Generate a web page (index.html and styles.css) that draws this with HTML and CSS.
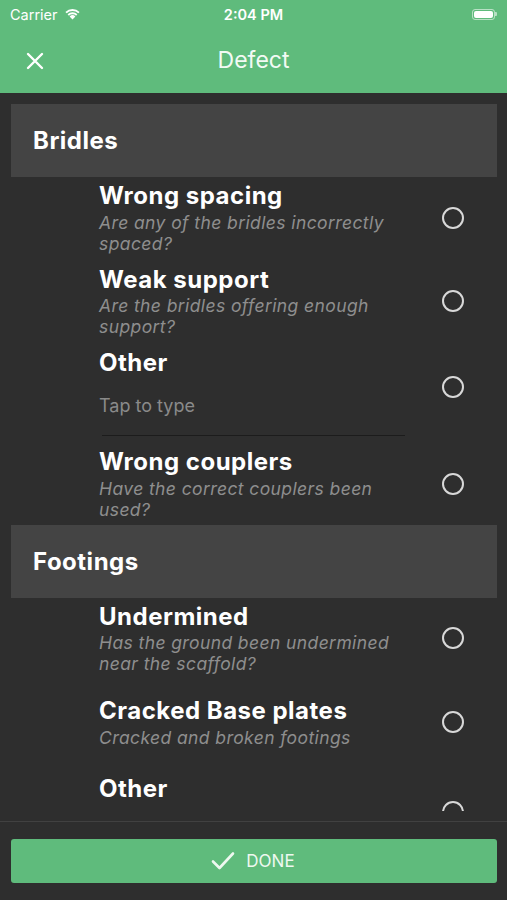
FILE: index.html
```html
<!DOCTYPE html>
<html>
<head>
<meta charset="utf-8">
<link rel="stylesheet" href="styles.css">
</head>
<body>
<div class="app">
  <div class="topbar">
    <div class="status">
      <div class="status-left">
        <span class="carrier">Carrier</span>
        <svg class="wifi" width="17" height="13" viewBox="0 0 17 13"><path d="M8.5 12.6 L5.6 9.4 A4.2 4.2 0 0 1 11.4 9.4 Z" fill="#fff"/><path d="M3.6 7.3 A7 7 0 0 1 13.4 7.3 L12.1 8.7 A5.2 5.2 0 0 0 4.9 8.7 Z" fill="#fff"/><path d="M1.4 4.9 A10.2 10.2 0 0 1 15.6 4.9 L14.3 6.3 A8.3 8.3 0 0 0 2.7 6.3 Z" fill="#fff"/></svg>
      </div>
      <span class="time">2:04 PM</span>
      <div class="status-right">
        <span class="battery"><span class="battery-fill"></span></span><span class="battery-tip"></span>
      </div>
    </div>
    <div class="nav">
      <svg class="close" width="18" height="18" viewBox="0 0 18 18"><path d="M2 2 L16 16 M16 2 L2 16" stroke="#fff" stroke-width="2.4" stroke-linecap="round"/></svg>
      <span class="nav-title">Defect</span>
    </div>
  </div>

  <div class="list">
    <div class="section">Bridles</div>
    <div class="row">
      <div class="text">
        <div class="title">Wrong spacing</div>
        <div class="sub">Are any of the bridles incorrectly spaced?</div>
      </div>
      <span class="radio"></span>
    </div>
    <div class="row">
      <div class="text">
        <div class="title">Weak support</div>
        <div class="sub">Are the bridles offering enough support?</div>
      </div>
      <span class="radio"></span>
    </div>
    <div class="row row-other">
      <div class="text">
        <div class="title">Other</div>
        <div class="input">Tap to type</div>
      </div>
      <span class="radio radio-up"></span>
    </div>
    <div class="row row-last">
      <div class="text">
        <div class="title">Wrong couplers</div>
        <div class="sub">Have the correct couplers been used?</div>
      </div>
      <span class="radio"></span>
    </div>

    <div class="section">Footings</div>
    <div class="row row-loose">
      <div class="text">
        <div class="title">Undermined</div>
        <div class="sub">Has the ground been undermined near the scaffold?</div>
      </div>
      <span class="radio"></span>
    </div>
    <div class="row row-loose2">
      <div class="text">
        <div class="title">Cracked Base plates</div>
        <div class="sub">Cracked and broken footings</div>
      </div>
      <span class="radio"></span>
    </div>
    <div class="row row-other">
      <div class="text">
        <div class="title">Other</div>
        <div class="input">Tap to type</div>
      </div>
      <span class="radio radio-up"></span>
    </div>
  </div>

  <div class="footer">
    <button class="done">
      <svg width="24" height="20" viewBox="0 0 24 20"><path d="M2 10.5 L8.5 17 L22 2.5" stroke="#eef8f0" stroke-width="2.6" fill="none" stroke-linecap="round" stroke-linejoin="round"/></svg>
      <span>DONE</span>
    </button>
  </div>
</div>
</body>
</html>
```
FILE: styles.css
```css
* { box-sizing: border-box; }
html, body { margin: 0; padding: 0; }
body {
  width: 507px;
  height: 900px;
  background: #2e2e2e;
  font-family: Inter, "Open Sans", sans-serif;
  overflow: hidden;
}
.app {
  display: flex;
  flex-direction: column;
  height: 900px;
}
.topbar {
  background: #5fbb7c;
  height: 93px;
  flex-shrink: 0;
}
.status {
  height: 28px;
  display: flex;
  align-items: center;
  justify-content: space-between;
  padding: 0 10px 0 10px;
  color: #fff;
  font-size: 14.5px;
}
.status-left {
  display: flex;
  align-items: center;
  gap: 6px;
  width: 120px;
}
.carrier { font-weight: 400; }
.wifi { margin-top: -1px; }
.time {
  font-weight: 600;
  font-size: 14.5px;
}
.status-right {
  width: 120px;
  display: flex;
  justify-content: flex-end;
  align-items: center;
}
.battery {
  width: 23px;
  height: 11px;
  border-radius: 3px;
  border: 1px solid rgba(255,255,255,0.55);
  padding: 1px;
  display: flex;
}
.battery-fill {
  flex: 1;
  background: #fff;
  border-radius: 2px;
}
.battery-tip {
  width: 1.5px;
  height: 4px;
  background: rgba(255,255,255,0.55);
  border-radius: 0 1px 1px 0;
}
.nav {
  height: 65px;
  display: flex;
  align-items: center;
  justify-content: center;
  position: relative;
}
.close {
  position: absolute;
  left: 26px;
  top: 24px;
}
.nav-title {
  color: #f2faf4;
  font-size: 23px;
  font-weight: 400;
  margin-top: -2px;
}
.list {
  flex: 1;
  overflow: hidden;
  padding: 11px 10px 0 11px;
  margin-bottom: 10px;
}
.section {
  background: #444444;
  height: 73px;
  display: flex;
  align-items: center;
  padding-left: 22px;
  color: #fff;
  font-size: 24px;
  font-weight: 700;
  letter-spacing: 0.5px;
}
.row {
  display: flex;
  align-items: center;
  padding: 5px 33px 7px 88px;
}
.row-last { padding-bottom: 5px; }
.row-loose { padding-bottom: 18px; }
.row-loose2 { padding-bottom: 22px; }
.text {
  flex: 1;
  min-width: 0;
}
.title {
  color: #fff;
  font-size: 24px;
  font-weight: 700;
  line-height: 28px;
  letter-spacing: 0.5px;
}
.sub {
  color: #8e8e8e;
  font-size: 17.5px;
  font-style: italic;
  line-height: 21px;
  letter-spacing: 0.4px;
  margin-top: 1.5px;
}
.input {
  color: #8a8a8a;
  font-size: 18px;
  line-height: 58px;
  height: 59px;
  border-bottom: 1px solid #1c1c1c;
  margin-left: 3px;
  text-indent: -3px;
  margin-right: 2px;
}
.radio {
  width: 22px;
  height: 22px;
  border-radius: 50%;
  border: 2.3px solid #d8d8d8;
  flex-shrink: 0;
  margin-left: 35px;
}
.radio-up { margin-bottom: 12px; }
.footer {
  flex-shrink: 0;
  border-top: 1px solid #414141;
  padding: 17px 10px 17px 11px;
  background: #2e2e2e;
}
.done {
  width: 100%;
  height: 44px;
  border: none;
  border-radius: 3px;
  background: #5fbb7c;
  display: flex;
  align-items: center;
  justify-content: center;
  gap: 11px;
  color: #eef8f0;
  font-family: Inter, "Open Sans", sans-serif;
  font-size: 17px;
  font-weight: 400;
  padding: 0;
}
.done svg { margin-left: -2px; }
```
